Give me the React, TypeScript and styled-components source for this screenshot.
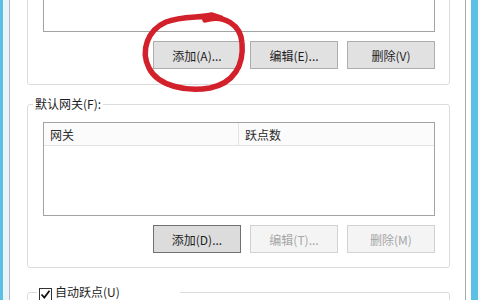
import * as React from 'react'
import styled, { createGlobalStyle } from 'styled-components'

const GlobalStyle = createGlobalStyle`
  html, body {
    margin: 0;
    padding: 0;
    background: #ffffff;
  }
  body {
    font-family: "Noto Sans CJK SC", "Noto Sans", sans-serif;
    font-size: 12px;
    color: #1e1e1e;
  }
`

const Frame = styled.div`
  position: relative;
  width: 480px;
  height: 300px;
  overflow: hidden;
  display: flex;
  background: #ffffff;
`

const LeftEdge = styled.div`
  width: 10px;
  flex: none;
  background: linear-gradient(
    to right,
    #5bbfe6 0 3px,
    #e8f4f6 3px 9px,
    #b8b2c6 9px 10px
  );
`

const RightEdge = styled.div`
  width: 15px;
  flex: none;
  background: linear-gradient(
    to right,
    #a9a9b0 0 1px,
    #ffffff 1px 6px,
    #5bbfe6 6px 13px,
    #f4fafc 13px 15px
  );
`

const Dialog = styled.div`
  flex: 1;
  display: flex;
  flex-direction: column;
  padding: 0 15px 0 17px;
  min-width: 0;
`

const CutGroup = styled.div`
  margin-top: -50px;
  border: 1px solid #dcdcdc;
  border-radius: 3px;
  padding: 10px 14px 15px 15px;
`

const Group = styled.fieldset<{ $gap: number }>`
  margin: ${p => p.$gap}px 0 0 0;
  padding: 0;
  border: 1px solid #dcdcdc;
  border-radius: 3px;
  min-inline-size: 0;
`

const Legend = styled.legend<{ $width?: number }>`
  margin-left: ${p => (p.$width ? 9 : 5)}px;
  padding: 0 2px;
  line-height: 16px;
  height: 16px;
  display: flex;
  align-items: center;
  gap: 3px;
  box-sizing: border-box;
  ${p => (p.$width ? `width: ${p.$width}px;` : '')}
`

const GroupBody = styled.div`
  padding: 10px 14px 14px 15px;
`

const ListBox = styled.div<{ $height: number }>`
  box-sizing: border-box;
  height: ${p => p.$height}px;
  border: 1px solid #a3a3a3;
  background: #ffffff;
`

const HeaderRow = styled.div`
  display: flex;
  height: 23px;
  box-sizing: border-box;
  border-bottom: 1px solid #e3e3e3;
  background: #fbfbfb;
`

const HeaderCell = styled.div<{ $width?: number }>`
  box-sizing: border-box;
  ${p => (p.$width ? `width: ${p.$width}px; border-right: 1px solid #e3e3e3;` : 'flex: 1;')}
  padding-left: 6px;
  line-height: 23px;
  color: #2a2a2a;
`

const ButtonRow = styled.div`
  display: flex;
  justify-content: flex-end;
  gap: 9px;
  margin-top: 9px;
`

const Button = styled.button<{ $default?: boolean }>`
  box-sizing: border-box;
  width: 88px;
  height: 28px;
  padding: 0;
  font-family: inherit;
  font-size: 12px;
  color: ${p => (p.disabled ? '#a6a6a6' : '#1e1e1e')};
  background: ${p => (p.disabled ? '#f4f4f4' : p.$default ? '#dcdcdc' : '#e1e1e1')};
  border: 1px solid ${p => (p.disabled ? '#d2d2d2' : p.$default ? '#707070' : '#adadad')};
  border-radius: 0;
`

const CheckBox = styled.span`
  display: inline-flex;
  align-items: center;
  justify-content: center;
  box-sizing: border-box;
  width: 13px;
  height: 13px;
  border: 1px solid #333333;
  background: #ffffff;
  margin-top: 4px;
`

const Overlay = styled.svg`
  position: absolute;
  left: 0;
  top: 0;
  pointer-events: none;
`

const App: React.FC = () => {
  return (
    <>
      <GlobalStyle />
      <Frame>
        <LeftEdge />
        <Dialog>
          <CutGroup>
            <ListBox $height={71} />
            <ButtonRow>
              <Button>添加(A)...</Button>
              <Button>编辑(E)...</Button>
              <Button>删除(V)</Button>
            </ButtonRow>
          </CutGroup>

          <Group $gap={11}>
            <Legend>默认网关(F):</Legend>
            <GroupBody>
              <ListBox $height={94}>
                <HeaderRow>
                  <HeaderCell $width={195}>网关</HeaderCell>
                  <HeaderCell>跃点数</HeaderCell>
                </HeaderRow>
              </ListBox>
              <ButtonRow>
                <Button $default>添加(D)...</Button>
                <Button disabled>编辑(T)...</Button>
                <Button disabled>删除(M)</Button>
              </ButtonRow>
            </GroupBody>
          </Group>

          <Group $gap={16}>
            <Legend $width={143}>
              <CheckBox>
                <svg width="11" height="11" viewBox="0 0 11 11">
                  <path d="M1.5 5.5 L4.3 8.5 L9.5 1.8" fill="none" stroke="#111" strokeWidth="1.8" />
                </svg>
              </CheckBox>
              <span>自动跃点(U)</span>
            </Legend>
            <GroupBody />
          </Group>
        </Dialog>
        <RightEdge />
        <Overlay width="480" height="300" viewBox="0 0 480 300">
          <path
            d="M205 20 C224 14, 241 25, 242 43 C244 65, 234 83, 210 88 C186 92, 158 86, 149 68 C140 50, 148 30, 166 22 C182 16, 200 18, 212 15 L221 18"
            fill="none"
            stroke="#d3212b"
            strokeWidth="5.5"
            strokeLinecap="round"
            strokeLinejoin="round"
          />
        </Overlay>
      </Frame>
    </>
  )
}

export default App
